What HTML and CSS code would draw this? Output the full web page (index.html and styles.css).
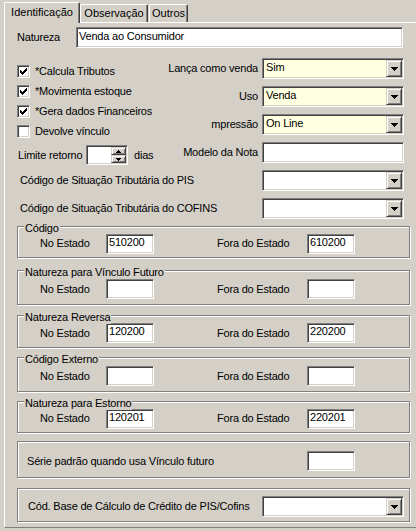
FILE: index.html
```html
<!DOCTYPE html>
<html lang="pt">
<head>
<meta charset="utf-8">
<link rel="stylesheet" href="styles.css">
</head>
<body>
<div class="tabs">
  <div class="tab active">Identificação</div>
  <div class="tab obs">Observação</div>
  <div class="tab outros">Outros</div>
</div>
<div class="page">
  <div class="nat-row">
    <span class="nat-lbl">Natureza</span>
    <div class="edit nat-edit">Venda ao Consumidor</div>
  </div>

  <div class="mid">
    <div class="checks">
      <div class="check"><span class="box"><svg width="7" height="7" viewBox="0 0 7 7"><path d="M0 2h1v3h-1zM1 3h1v3h-1zM2 4h1v3h-1zM3 3h1v3h-1zM4 2h1v3h-1zM5 1h1v3h-1zM6 0h1v3h-1z"/></svg></span>*Calcula Tributos</div>
      <div class="check"><span class="box"><svg width="7" height="7" viewBox="0 0 7 7"><path d="M0 2h1v3h-1zM1 3h1v3h-1zM2 4h1v3h-1zM3 3h1v3h-1zM4 2h1v3h-1zM5 1h1v3h-1zM6 0h1v3h-1z"/></svg></span>*Movimenta estoque</div>
      <div class="check"><span class="box"><svg width="7" height="7" viewBox="0 0 7 7"><path d="M0 2h1v3h-1zM1 3h1v3h-1zM2 4h1v3h-1zM3 3h1v3h-1zM4 2h1v3h-1zM5 1h1v3h-1zM6 0h1v3h-1z"/></svg></span>*Gera dados Financeiros</div>
      <div class="check"><span class="box"></span>Devolve vínculo</div>
      <div class="limite">
        <span class="lim-lbl">Limite retorno</span>
        <div class="spin">
          <div class="spin-field"></div>
          <div class="spin-btns">
            <div class="sbtn"><svg width="5" height="3" viewBox="0 0 5 3"><path d="M2 0h1v1h1v1h1v1h-5v-1h1v-1h1z"/></svg></div>
            <div class="sbtn"><svg width="5" height="3" viewBox="0 0 5 3"><path d="M0 0h5v1h-1v1h-1v1h-1v-1h-1v-1h-1z"/></svg></div>
          </div>
        </div>
        <span class="dias">dias</span>
      </div>
    </div>
    <div class="fields">
      <div class="frow"><span class="flbl">Lança como venda</span><div class="combo info"><span class="val">Sim</span><span class="cbtn"><svg width="7" height="4" viewBox="0 0 7 4"><path d="M0 0h7v1h-1v1h-1v1h-1v1h-1v-1h-1v-1h-1v-1h-1z"/></svg></span></div></div>
      <div class="frow"><span class="flbl">Uso</span><div class="combo info"><span class="val">Venda</span><span class="cbtn"><svg width="7" height="4" viewBox="0 0 7 4"><path d="M0 0h7v1h-1v1h-1v1h-1v1h-1v-1h-1v-1h-1v-1h-1z"/></svg></span></div></div>
      <div class="frow"><span class="flbl">mpressão</span><div class="combo info"><span class="val">On Line</span><span class="cbtn"><svg width="7" height="4" viewBox="0 0 7 4"><path d="M0 0h7v1h-1v1h-1v1h-1v1h-1v-1h-1v-1h-1v-1h-1z"/></svg></span></div></div>
      <div class="frow"><span class="flbl">Modelo da Nota</span><div class="edit field-edit"></div></div>
    </div>
  </div>

  <div class="cst cst-pis"><span class="cst-lbl">Código de Situação Tributária do PIS</span><div class="combo"><span class="val"></span><span class="cbtn"><svg width="7" height="4" viewBox="0 0 7 4"><path d="M0 0h7v1h-1v1h-1v1h-1v1h-1v-1h-1v-1h-1v-1h-1z"/></svg></span></div></div>
  <div class="cst cst-cofins"><span class="cst-lbl">Código de Situação Tributária do COFINS</span><div class="combo"><span class="val"></span><span class="cbtn"><svg width="7" height="4" viewBox="0 0 7 4"><path d="M0 0h7v1h-1v1h-1v1h-1v1h-1v-1h-1v-1h-1v-1h-1z"/></svg></span></div></div>

  <div class="grp g-cod">
    <span class="legend">Código</span>
    <span class="ne-lbl">No Estado</span><div class="edit small">510200</div>
    <span class="fora-lbl">Fora do Estado</span><div class="edit small">610200</div>
  </div>
  <div class="grp g-vinc">
    <span class="legend">Natureza para Vínculo Futuro</span>
    <span class="ne-lbl">No Estado</span><div class="edit small"></div>
    <span class="fora-lbl">Fora do Estado</span><div class="edit small"></div>
  </div>
  <div class="grp g-rev">
    <span class="legend">Natureza Reversa</span>
    <span class="ne-lbl">No Estado</span><div class="edit small">120200</div>
    <span class="fora-lbl">Fora do Estado</span><div class="edit small">220200</div>
  </div>
  <div class="grp g-ext">
    <span class="legend">Código Externo</span>
    <span class="ne-lbl">No Estado</span><div class="edit small"></div>
    <span class="fora-lbl">Fora do Estado</span><div class="edit small"></div>
  </div>
  <div class="grp g-est">
    <span class="legend">Natureza para Estorno</span>
    <span class="ne-lbl">No Estado</span><div class="edit small">120201</div>
    <span class="fora-lbl">Fora do Estado</span><div class="edit small">220201</div>
  </div>
  <div class="grp g-serie">
    <span class="serie-lbl">Série padrão quando usa Vínculo futuro</span><div class="edit small"></div>
  </div>
  <div class="grp g-base">
    <span class="base-lbl">Cód. Base de Cálculo de Crédito de PIS/Cofins</span>
    <div class="combo"><span class="val"></span><span class="cbtn"><svg width="7" height="4" viewBox="0 0 7 4"><path d="M0 0h7v1h-1v1h-1v1h-1v1h-1v-1h-1v-1h-1v-1h-1z"/></svg></span></div>
  </div>
</div>
</body>
</html>
```

FILE: styles.css
```css
* { box-sizing: border-box; }
html, body { margin: 0; padding: 0; }
body {
  background: #d4d0c8;
  width: 416px;
  height: 531px;
  overflow: hidden;
  font-family: "Liberation Sans", Arial, sans-serif;
  font-size: 11px;
  line-height: 13px;
  letter-spacing: -0.2px;
  color: #000;
}
svg { display: block; fill: #000; }

/* tabs */
.tabs {
  display: flex;
  align-items: flex-end;
  height: 22px;
  padding-left: 4px;
}
.tab {
  height: 18px;
  border: 1px solid #fff;
  border-bottom: none;
  border-right-color: #404040;
  border-radius: 2px 2px 0 0;
  box-shadow: inset -1px 0 0 #808080;
  padding-top: 2px;
  text-align: center;
  white-space: nowrap;
  letter-spacing: 0;
}
.tab.active {
  position: relative;
  z-index: 1;
  width: 76px;
  height: 21px;
  margin-bottom: -1px;
  background: #d4d0c8;
  padding-top: 3px;
}
.tab.obs { width: 68px; }
.tab.outros { width: 39px; margin-left: 1px; }

/* page */
.page {
  height: 506px;
  margin-left: 4px;
  border-top: 1px solid #fff;
  border-left: 1px solid #fff;
  border-bottom: 1px solid #808080;
  padding: 4px 0 0 12px;
  overflow: hidden;
}

/* sunken edit */
.edit, .combo, .box, .spin {
  background: #fff;
  border: 1px solid;
  border-color: #808080 #fff #fff #808080;
  box-shadow: inset 1px 1px 0 #404040, inset -1px -1px 0 #d4d0c8;
}
.edit {
  padding: 1px 2px 0 2px;
  line-height: 14px;
  white-space: nowrap;
  overflow: hidden;
}

.nat-row {
  display: flex;
  align-items: center;
  height: 21px;
}
.nat-lbl { width: 59px; }
.nat-edit { width: 327px; height: 21px; }

/* middle */
.mid {
  display: flex;
  margin-top: 10px;
}
.checks {
  width: 145px;
  padding-top: 7px;
}
.check {
  display: flex;
  align-items: center;
  height: 13px;
  margin-bottom: 7px;
  white-space: nowrap;
}
.box {
  width: 13px;
  height: 13px;
  margin-right: 5px;
  display: flex;
  align-items: center;
  justify-content: center;
  flex: none;
}
.limite {
  display: flex;
  align-items: center;
  margin-top: 2px;
  height: 20px;
}
.lim-lbl { width: 69px; padding-left: 1px; }
.spin {
  width: 42px;
  height: 20px;
  display: flex;
  padding: 1px;
}
.spin-field { flex: 1; }
.spin-btns {
  width: 15px;
  display: flex;
  flex-direction: column;
}
.sbtn {
  flex: 1;
  background: #d4d0c8;
  border: 1px solid;
  border-color: #d4d0c8 #404040 #404040 #d4d0c8;
  box-shadow: inset 1px 1px 0 #fff, inset -1px -1px 0 #808080;
  display: flex;
  align-items: center;
  justify-content: center;
}
.dias { margin-left: 6px; }

.fields {
  width: 242px;
  display: flex;
  flex-direction: column;
  gap: 7px;
}
.frow {
  display: flex;
  align-items: center;
  height: 21px;
}
.flbl {
  flex: 1;
  text-align: right;
  padding-right: 4px;
  white-space: nowrap;
}
.field-edit { width: 142px; height: 21px; }

/* combo */
.combo {
  width: 142px;
  height: 21px;
  display: flex;
  padding: 1px;
  flex: none;
}
.combo.info { background: #ffffe1; }
.combo .val {
  flex: 1;
  padding-left: 2px;
  line-height: 14px;
}
.cbtn {
  width: 16px;
  background: #d4d0c8;
  border: 1px solid;
  border-color: #d4d0c8 #404040 #404040 #d4d0c8;
  box-shadow: inset 1px 1px 0 #fff, inset -1px -1px 0 #808080;
  display: flex;
  align-items: center;
  justify-content: center;
}

.cst {
  display: flex;
  align-items: center;
  width: 387px;
  height: 21px;
  padding-left: 3px;
}
.cst-pis { margin-top: 5px; }
.cst-cofins { margin-top: 7px; }
.cst-lbl { flex: 1; }

/* group boxes */
.grp {
  position: relative;
  width: 393px;
  border: 1px solid #808080;
  box-shadow: inset 1px 1px 0 #fff, 1px 1px 0 #fff;
  display: flex;
  align-items: center;
  padding: 3px 0 0 22px;
}
.legend {
  position: absolute;
  top: -5px;
  left: 6px;
  padding: 0 1px;
  background: #d4d0c8;
  white-space: nowrap;
}
.g-cod { margin-top: 7px; height: 32px; }
.g-vinc { margin-top: 12px; height: 35px; }
.g-rev { margin-top: 10px; height: 33px; }
.g-ext { margin-top: 9px; height: 35px; }
.g-est { margin-top: 9px; height: 32px; }
.g-serie { margin-top: 8px; height: 37px; padding-left: 9px; }
.g-base { margin-top: 10px; height: 34px; padding-left: 10px; }

.ne-lbl { width: 66px; }
.fora-lbl { width: 90px; margin-left: 63px; }
.edit.small {
  width: 48px;
  height: 20px;
  padding-top: 0;
}
.serie-lbl { width: 280px; }
.base-lbl { width: 234px; }
```
